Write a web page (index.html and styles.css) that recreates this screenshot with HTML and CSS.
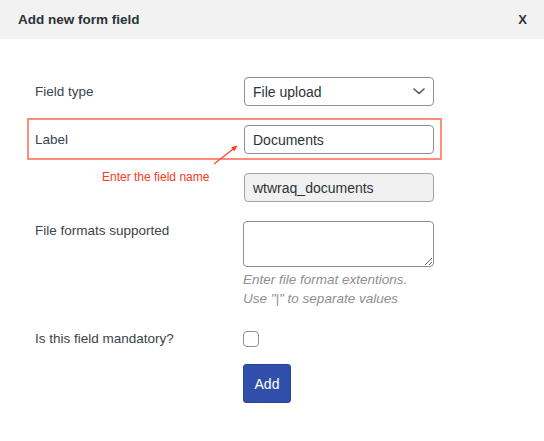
FILE: index.html
```html
<!DOCTYPE html>
<html lang="en">
<head>
<meta charset="utf-8">
<title>Add new form field</title>
<link rel="stylesheet" href="styles.css">
</head>
<body>
<div class="modal">
  <header class="modal-header">
    <h2 class="title">Add new form field</h2>
    <button class="close" type="button">X</button>
  </header>
  <form class="modal-body">
    <div class="row">
      <label class="lbl">Field type</label>
      <div class="control select">
        <span>File upload</span>
        <svg class="chev" width="12" height="7" viewBox="0 0 12 7"><path d="M1 1 L6 5.5 L11 1" fill="none" stroke="#50575e" stroke-width="1.6" stroke-linecap="round" stroke-linejoin="round"/></svg>
      </div>
    </div>
    <div class="row highlight">
      <label class="lbl">Label</label>
      <input class="control" type="text" value="Documents">
    </div>
    <div class="row">
      <span class="note">Enter the field name</span>
      <input class="control disabled" type="text" value="wtwraq_documents" disabled>
    </div>
    <div class="row top">
      <label class="lbl lbl-top">File formats supported</label>
      <textarea class="control area"></textarea>
      <p class="hint">Enter file format extentions.<br>Use "|" to separate values</p>
    </div>
    <div class="row check-row">
      <label class="lbl">Is this field mandatory?</label>
      <input class="check" type="checkbox">
    </div>
    <div class="row btn-row">
      <span></span>
      <button class="add" type="button">Add</button>
    </div>
  </form>
  <svg class="arrow" width="544" height="441" viewBox="0 0 544 441">
    <line x1="214" y1="164" x2="233.5" y2="148.8" stroke="#ff4a2e" stroke-width="1.3"/>
    <polygon points="237.5,145.5 234.4,151.3 231.2,147.2" fill="#ff3a1c"/>
  </svg>
</div>
</body>
</html>
```

FILE: styles.css
```css
* { box-sizing: border-box; }

html, body {
  margin: 0;
  padding: 0;
  background: #ffffff;
}

body {
  font-family: "Liberation Sans", Arial, sans-serif;
  color: #3c434a;
}

.modal {
  position: relative;
  width: 544px;
  height: 441px;
  background: #ffffff;
}

.modal-header {
  height: 39px;
  background: #f2f2f2;
  display: flex;
  align-items: center;
  justify-content: space-between;
  padding: 0 17px 0 18px;
}

.title {
  margin: 0;
  font-size: 13.5px;
  font-weight: 700;
  color: #2c3338;
}

.close {
  border: 0;
  background: none;
  padding: 0;
  font-family: inherit;
  font-size: 13px;
  font-weight: 700;
  color: #2c3338;
}

.modal-body {
  padding-top: 38px;
}

.row {
  display: grid;
  grid-template-columns: 209px 190px;
  align-items: center;
  padding-left: 35px;
}

.row + .row { margin-top: 13px; }

.highlight {
  margin-top: 12px !important;
  margin-left: 27px;
  width: 415px;
  border: 2px solid #ff8d7a;
  padding: 5px 6px 4px 6px;
  grid-template-columns: 209px 190px;
}

.lbl {
  font-size: 13.5px;
  line-height: 20px;
  color: #3c434a;
}

.control {
  height: 29px;
  width: 190px;
  border: 1px solid #8c8f94;
  border-radius: 4px;
  padding: 0 8px;
  font-family: inherit;
  font-size: 14px;
  color: #2c3338;
  background: #ffffff;
  margin: 0;
}

.select {
  display: flex;
  align-items: center;
  justify-content: space-between;
  padding-right: 8px;
}

.chev { display: block; }

.disabled {
  background: #f0f0f1;
  border-color: #a0a3a8;
  color: #2c3338;
  -webkit-text-fill-color: #2c3338;
  opacity: 1;
}

.note {
  align-self: start;
  margin-top: -3px;
  padding-left: 67px;
  font-size: 12px;
  line-height: 14px;
  color: #f93a1c;
}

.top {
  align-items: start;
  margin-top: 19px !important;
}

.area {
  height: 46px;
  width: 191px;
  margin-left: -1px;
  resize: vertical;
  display: block;
}

.hint {
  grid-column: 2;
  margin: 3px 0 0 -1px;
  font-size: 13.5px;
  line-height: 19px;
  font-style: italic;
  color: #8c8f94;
}

.check-row {
  margin-top: 21px !important;
}

.check {
  appearance: none;
  -webkit-appearance: none;
  width: 16px;
  height: 16px;
  margin: 0 0 0 -1px;
  border: 1px solid #8c8f94;
  border-radius: 4px;
  background: #ffffff;
}

.btn-row {
  margin-top: 15px !important;
}

.add {
  width: 48px;
  height: 39px;
  margin-left: -1px;
  border: 1px solid #2a4799;
  border-radius: 3px;
  background: #2f4fab;
  color: #ffffff;
  font-family: inherit;
  font-size: 14px;
  padding: 0;
}

.arrow {
  position: absolute;
  left: 0;
  top: 0;
  pointer-events: none;
}
```
